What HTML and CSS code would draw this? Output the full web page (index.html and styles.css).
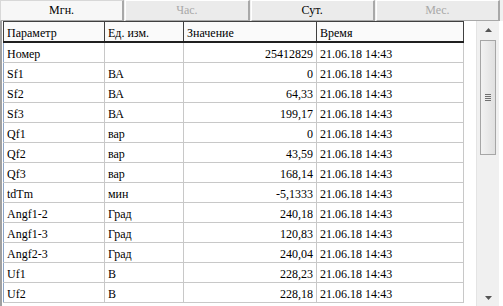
FILE: index.html
```html
<!DOCTYPE html>
<html>
<head>
<meta charset="utf-8">
<link rel="stylesheet" href="styles.css">
</head>
<body>
<div class="app">
  <div class="tabs">
    <div class="tab active">Мгн.</div>
    <div class="tab disabled">Час.</div>
    <div class="tab">Сут.</div>
    <div class="tab disabled">Мес.</div>
  </div>
  <div class="grid-wrap">
    <div class="grid">
      <table class="data">
        <colgroup>
          <col class="c1"><col class="c2"><col class="c3"><col class="c4">
        </colgroup>
        <thead>
          <tr><th>Параметр</th><th>Ед. изм.</th><th>Значение</th><th>Время</th></tr>
        </thead>
        <tbody>
          <tr><td>Номер</td><td></td><td class="num">25412829</td><td>21.06.18 14:43</td></tr>
          <tr><td>Sf1</td><td>ВА</td><td class="num">0</td><td>21.06.18 14:43</td></tr>
          <tr><td>Sf2</td><td>ВА</td><td class="num">64,33</td><td>21.06.18 14:43</td></tr>
          <tr><td>Sf3</td><td>ВА</td><td class="num">199,17</td><td>21.06.18 14:43</td></tr>
          <tr><td>Qf1</td><td>вар</td><td class="num">0</td><td>21.06.18 14:43</td></tr>
          <tr><td>Qf2</td><td>вар</td><td class="num">43,59</td><td>21.06.18 14:43</td></tr>
          <tr><td>Qf3</td><td>вар</td><td class="num">168,14</td><td>21.06.18 14:43</td></tr>
          <tr><td>tdTm</td><td>мин</td><td class="num">-5,1333</td><td>21.06.18 14:43</td></tr>
          <tr><td>Angf1-2</td><td>Град</td><td class="num">240,18</td><td>21.06.18 14:43</td></tr>
          <tr><td>Angf1-3</td><td>Град</td><td class="num">120,83</td><td>21.06.18 14:43</td></tr>
          <tr><td>Angf2-3</td><td>Град</td><td class="num">240,04</td><td>21.06.18 14:43</td></tr>
          <tr><td>Uf1</td><td>В</td><td class="num">228,23</td><td>21.06.18 14:43</td></tr>
          <tr><td>Uf2</td><td>В</td><td class="num">228,18</td><td>21.06.18 14:43</td></tr>
        </tbody>
      </table>
    </div>
    <div class="scrollbar">
      <div class="arrow up"><svg width="7" height="4" viewBox="0 0 7 4"><path d="M3.5 0 L7 4 L0 4 Z" fill="#555"/></svg></div>
      <div class="track">
        <div class="thumb">
          <div class="grip"><span></span><span></span><span></span><span></span></div>
        </div>
      </div>
      <div class="arrow down"><svg width="7" height="4" viewBox="0 0 7 4"><path d="M0 0 L7 0 L3.5 4 Z" fill="#555"/></svg></div>
    </div>
  </div>
</div>
</body>
</html>
```

FILE: styles.css
```css
html, body {
  margin: 0;
  padding: 0;
  background: #ffffff;
}
body {
  font-family: "Liberation Serif", "Times New Roman", serif;
  font-size: 12px;
  color: #000;
}
.app {
  width: 503px;
  height: 306px;
  overflow: hidden;
  display: flex;
  flex-direction: column;
  background: #ffffff;
}
.tabs {
  display: flex;
  height: 21px;
  padding-right: 3px;
  gap: 1px;
  background: #f0f0f0;
}
.tab {
  flex: 1;
  box-sizing: border-box;
  height: 21px;
  background: #ebebeb;
  border-top: 1px solid #ffffff;
  border-left: 1px solid #ffffff;
  border-right: 2px solid #a8a8a8;
  border-bottom: 1px solid #a8a8a8;
  text-align: center;
  line-height: 19px;
  color: #000;
}
.tab.active {
  background: #f7f7f7;
  border-top-color: #d8d8d8;
  border-left-color: #d8d8d8;
}
.tab.disabled {
  color: #a8a8a8;
}
.grid-wrap {
  flex: 1;
  display: flex;
  min-height: 0;
}
.grid {
  width: 473px;
  box-sizing: border-box;
  border-left: 2px solid #a0a0a0;
  padding-left: 1px;
  background: #fff;
  overflow: hidden;
}
.data {
  border-collapse: collapse;
  table-layout: fixed;
  width: 460px;
}
.c1 { width: 101px; }
.c2 { width: 79px; }
.c3 { width: 133px; }
.c4 { width: 147px; }
.data th {
  font-weight: normal;
  text-align: left;
  height: 20px;
  box-sizing: border-box;
  padding: 3px 3px 0 3px;
  line-height: 14px;
  border-top: 1px solid #404040;
  border-left: 1px solid #404040;
  border-right: 1px solid #404040;
  border-bottom: 2px solid #202020;
  background: #fafafa;
  white-space: nowrap;
}
.data td {
  height: 20px;
  box-sizing: border-box;
  padding: 4px 3px 0 3px;
  line-height: 15px;
  border-left: 1px solid #c8c8c8;
  border-right: 1px solid #c8c8c8;
  border-bottom: 1px solid #c8c8c8;
  white-space: nowrap;
  overflow: hidden;
}
.data tbody td:first-child {
  border-left: 1px solid #8aa4c8;
}
.data td.num {
  text-align: right;
}
.scrollbar {
  width: 22px;
  margin-left: 3px;
  display: flex;
  flex-direction: column;
  background: #f0f0f0;
  border-left: 1px solid #e4e4e4;
}
.arrow {
  height: 17px;
  display: flex;
  align-items: center;
  justify-content: center;
}
.track {
  flex: 1;
  padding: 0 3px;
}
.thumb {
  box-sizing: border-box;
  height: 115px;
  margin-top: 2px;
  border: 1px solid #a6a6a6;
  background: linear-gradient(to right, #f2f2f2, #e0e0e0);
  display: flex;
  align-items: center;
  justify-content: center;
}
.grip {
  display: flex;
  flex-direction: column;
  gap: 1px;
}
.grip span {
  display: block;
  width: 6px;
  height: 1px;
  background: #707070;
}
```
